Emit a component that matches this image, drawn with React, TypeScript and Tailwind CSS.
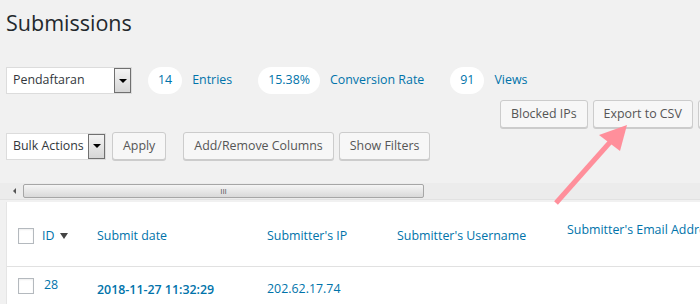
import React from "react";

const font = { fontFamily: '"Open Sans", "Noto Sans", Arial, sans-serif' };

function SelectBox({ label, width }: { label: string; width: string }) {
  return (
    <div className={`flex h-[27px] ${width} items-stretch border border-[#dcdcdc] bg-white`}>
      <span className="flex flex-1 items-center pl-[6px] text-[12.4px] text-[#32373c]">{label}</span>
      <span className="flex w-[17px] items-center justify-center border border-[#707070] bg-gradient-to-b from-[#f4f4f4] to-[#d6d6d6]">
        <span className="h-0 w-0 border-x-[4px] border-t-[4px] border-x-transparent border-t-black" />
      </span>
    </div>
  );
}

function Button({ children }: { children?: React.ReactNode }) {
  return (
    <button className="h-[28px] shrink-0 whitespace-nowrap rounded-[3px] border border-[#cccccc] bg-[#f7f7f7] px-[10px] text-[12.4px] text-[#555555] shadow-[0_1px_0_#cccccc]">
      {children}
    </button>
  );
}

function Pill({ children }: { children: React.ReactNode }) {
  return (
    <span className="flex h-[27px] items-center rounded-full bg-white px-[10px] text-[12.4px] text-[#0073aa]">
      {children}
    </span>
  );
}

function Checkbox() {
  return <span className="block h-[16px] w-[16px] border border-[#b4b9be] bg-white shadow-[inset_0_1px_2px_rgba(0,0,0,0.07)]" />;
}

export default function App() {
  return (
    <div className="relative h-[304px] w-[700px] overflow-hidden bg-[#f1f1f1]" style={font}>
      <h1 className="pl-[6px] pt-[7px] text-[21.5px] font-normal leading-[32px] text-[#23282d]">Submissions</h1>

      {/* stats row */}
      <div className="mt-[28px] flex items-center pl-[6px]">
        <SelectBox label="Pendaftaran" width="w-[126px]" />
        <div className="ml-[16px] flex items-center">
          <Pill>14</Pill>
          <span className="ml-[10px] text-[12.4px] text-[#0073aa]">Entries</span>
          <span className="ml-[26px]"><Pill>15.38%</Pill></span>
          <span className="ml-[10px] text-[12.4px] text-[#0073aa]">Conversion Rate</span>
          <span className="ml-[26px]"><Pill>91</Pill></span>
          <span className="ml-[10px] text-[12.4px] text-[#0073aa]">Views</span>
        </div>
      </div>

      {/* right actions */}
      <div className="mt-[6px] flex gap-[5px] pl-[500px]">
        <Button>Blocked IPs</Button>
        <Button>Export to CSV</Button>
        <span className="block h-[28px] w-[20px] shrink-0 rounded-[3px] border border-[#cccccc] bg-[#f7f7f7] shadow-[0_1px_0_#cccccc]" />
      </div>

      {/* bulk actions row */}
      <div className="mt-[4px] flex items-center pl-[6px]">
        <SelectBox label="Bulk Actions" width="w-[100px]" />
        <span className="ml-[6px]"><Button>Apply</Button></span>
        <span className="ml-[17px]"><Button>Add/Remove Columns</Button></span>
        <span className="ml-[5px]"><Button>Show Filters</Button></span>
      </div>

      {/* horizontal scrollbar */}
      <div className="mt-[23px] flex h-[17px] items-center border-b border-[#e2e2e2] bg-[#ececec] pl-[6px]">
        <span className="flex w-[17px] items-center justify-center">
          <span className="h-0 w-0 border-y-[3px] border-r-[3px] border-y-transparent border-r-[#555]" />
        </span>
        <span className="flex h-[14px] w-[401px] items-center justify-center rounded-[2px] border border-[#a6a6a6] bg-gradient-to-b from-[#f5f5f5] to-[#d9d9d9] text-[8px] leading-none text-[#555]">
          III
        </span>
      </div>

      {/* table */}
      <div className="ml-[6px] mt-[2px] border-l border-[#e5e5e5] bg-white">
        <div className="flex h-[65px] items-center border-b border-[#e1e1e1] pt-[3px] text-[12.4px] text-[#0073aa]">
          <span className="ml-[11px] shrink-0"><Checkbox /></span>
          <span className="ml-[8px] flex w-[55px] shrink-0 items-center gap-[6px]">
            ID
            <span className="h-0 w-0 border-x-[4px] border-t-[6px] border-x-transparent border-t-[#444]" />
          </span>
          <span className="w-[170px] shrink-0">Submit date</span>
          <span className="w-[130px] shrink-0">Submitter's IP</span>
          <span className="w-[170px] shrink-0">Submitter's Username</span>
          <span className="-mt-[12px] shrink-0 whitespace-nowrap">Submitter's Email Address</span>
        </div>
        <div className="flex h-[40px] items-start pt-[11px] text-[12.4px] text-[#0073aa]">
          <span className="ml-[11px] shrink-0"><Checkbox /></span>
          <span className="ml-[10px] -mt-[2px] w-[53px] shrink-0">28</span>
          <span className="mt-[3px] w-[170px] shrink-0 font-semibold">2018-11-27 11:32:29</span>
          <span className="mt-[2px] w-[130px] shrink-0">202.62.17.74</span>
        </div>
      </div>

      {/* annotation arrow */}
      <svg className="pointer-events-none absolute left-0 top-0" width="700" height="304">
        <line x1="556" y1="203" x2="612" y2="140" stroke="#ff8f9b" strokeWidth="5" />
        <polygon points="627,125 599,135 620,151" fill="#ff8f9b" />
      </svg>
    </div>
  );
}
